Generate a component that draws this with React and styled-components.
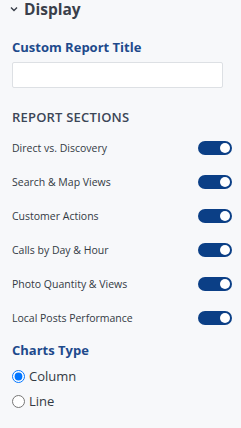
import React, { useState } from "react";
import styled, { createGlobalStyle } from "styled-components";

const GlobalStyle = createGlobalStyle`
  html, body {
    margin: 0;
    padding: 0;
    background: #f7f8fa;
    font-family: "Open Sans", "Noto Sans", sans-serif;
  }
`;

const Panel = styled.div`
  width: 241px;
  height: 428px;
  background: #f7f8fa;
  padding: 0 9px 0 12px;
  box-sizing: border-box;
  overflow: hidden;
`;

const Header = styled.div`
  display: flex;
  align-items: center;
  gap: 6px;
  margin-left: -2px;
  height: 18px;
  color: #3a3f4a;
  font-size: 15.5px;
  font-weight: 700;
  line-height: 18px;
`;

const Label = styled.div`
  color: #1e4a8c;
  font-size: 13px;
  font-weight: 700;
  line-height: 18px;
  margin-top: ${(p) => p.top || 0}px;
`;

const TextInput = styled.input`
  display: block;
  box-sizing: border-box;
  width: 211px;
  height: 26px;
  margin-top: 6px;
  border: 1px solid #dde0e4;
  border-radius: 2px;
  background: #fff;
  outline: none;
`;

const SectionTitle = styled.div`
  margin-top: 20px;
  color: #3c4656;
  font-size: 13px;
  font-weight: 600;
  letter-spacing: 0.2px;
  line-height: 18px;
`;

const List = styled.div`
  margin-top: 5px;
  display: flex;
  flex-direction: column;
`;

const Row = styled.div`
  height: 34px;
  display: flex;
  align-items: center;
  justify-content: space-between;
  color: #333a44;
  font-size: 10.5px;
`;

const Toggle = styled.button`
  width: 34px;
  height: 14px;
  border-radius: 7px;
  border: none;
  padding: 0 2px;
  display: flex;
  align-items: center;
  justify-content: ${(p) => (p.on ? "flex-end" : "flex-start")};
  background: ${(p) => (p.on ? "#0b3f86" : "#b8bec8")};
  cursor: pointer;
  box-sizing: border-box;
`;

const Knob = styled.span`
  width: 10px;
  height: 10px;
  border-radius: 50%;
  background: #fff;
`;

const Radios = styled.div`
  margin-top: 8px;
  display: flex;
  flex-direction: column;
  gap: 7px;
`;

const RadioLabel = styled.label`
  display: flex;
  align-items: center;
  gap: 4px;
  color: #333a44;
  font-size: 13px;
  line-height: 18px;
  cursor: pointer;

  input {
    margin: 0;
    width: 13px;
    height: 13px;
    accent-color: #0075ff;
  }
`;

const sections = [
  "Direct vs. Discovery",
  "Search & Map Views",
  "Customer Actions",
  "Calls by Day & Hour",
  "Photo Quantity & Views",
  "Local Posts Performance",
];

export default function App() {
  const [on, setOn] = useState(sections.map(() => true));
  const [chart, setChart] = useState("column");

  return (
    <>
      <GlobalStyle />
      <Panel>
        <Header>
          <svg width="8" height="6" viewBox="0 0 8 6">
            <path d="M1 1.5 L4 4.5 L7 1.5" fill="none" stroke="#3a3f4a" strokeWidth="1.4" />
          </svg>
          Display
        </Header>
        <Label top={20}>Custom Report Title</Label>
        <TextInput type="text" />
        <SectionTitle>REPORT SECTIONS</SectionTitle>
        <List>
          {sections.map((s, i) => (
            <Row key={s}>
              {s}
              <Toggle
                on={on[i]}
                onClick={() => setOn(on.map((v, j) => (j === i ? !v : v)))}
              >
                <Knob />
              </Toggle>
            </Row>
          ))}
        </List>
        <Label top={6}>Charts Type</Label>
        <Radios>
          <RadioLabel>
            <input
              type="radio"
              name="chart"
              checked={chart === "column"}
              onChange={() => setChart("column")}
            />
            Column
          </RadioLabel>
          <RadioLabel>
            <input
              type="radio"
              name="chart"
              checked={chart === "line"}
              onChange={() => setChart("line")}
            />
            Line
          </RadioLabel>
        </Radios>
      </Panel>
    </>
  );
}
